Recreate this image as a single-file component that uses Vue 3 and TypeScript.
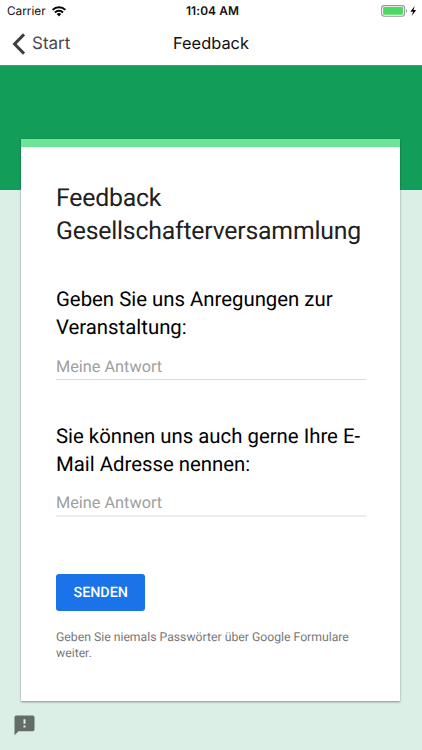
<script setup lang="ts">
import { ref } from 'vue'

interface Question {
  id: string
  lines: string[]
}

const questions: Question[] = [
  { id: 'suggestions', lines: ['Geben Sie uns Anregungen zur', 'Veranstaltung:'] },
  { id: 'email', lines: ['Sie können uns auch gerne Ihre E-', 'Mail Adresse nennen:'] },
]

const answers = ref<Record<string, string>>({ suggestions: '', email: '' })
</script>

<template>
  <div class="screen">
    <header class="top">
      <div class="status">
        <div class="carrier">
          <span>Carrier</span>
          <svg class="wifi" viewBox="0 0 16 12" width="16" height="12">
            <g fill="none" stroke="#000" stroke-width="2">
              <path d="M1.6 4.9a9.1 9.1 0 0 1 12.8 0" />
              <path d="M4 7.5a5.7 5.7 0 0 1 8 0" />
            </g>
            <path d="M5.7 9.1a3.3 3.3 0 0 1 4.6 0L8 11.5z" />
          </svg>
        </div>
        <div class="clock">11:04 AM</div>
        <div class="power">
          <svg viewBox="0 0 38 14" width="38" height="14">
            <rect x="1.6" y="1.6" width="23" height="10.6" rx="2.6" fill="#fff" stroke="#98989a" stroke-width="1.1" />
            <rect x="3.1" y="3.1" width="20" height="7.6" rx="1.2" fill="#4cd964" />
            <path d="M26 5.2c1.5.5 1.5 3 0 3.5z" fill="#98989a" />
            <path d="M34.6 2.1 30.4 7.8h2.7l-1.5 4.1 4.6-5.8h-2.7z" />
          </svg>
        </div>
      </div>
      <nav class="nav">
        <div class="back">
          <svg viewBox="0 0 14 24" width="14" height="24">
            <path d="M12 2.4 2.6 12l9.4 9.6" fill="none" stroke="#3f3f3f" stroke-width="3" />
          </svg>
          <span>Start</span>
        </div>
        <div class="nav-title">Feedback</div>
      </nav>
    </header>

    <main class="page">
      <form class="card" @submit.prevent>
        <h1 class="title">Feedback<br />Gesellschafterversammlung</h1>
        <section v-for="q in questions" :key="q.id" class="question" :class="q.id">
          <label :for="q.id">
            <span v-for="line in q.lines" :key="line" class="line">{{ line }}</span>
          </label>
          <input :id="q.id" v-model="answers[q.id]" type="text" placeholder="Meine Antwort" />
        </section>
        <button class="send" type="submit">SENDEN</button>
        <p class="note">Geben Sie niemals Passwörter über Google Formulare<br />weiter.</p>
      </form>
      <svg class="report" viewBox="0 0 21 21" width="21" height="21">
        <path d="M2.2.5h16.6q1.7 0 1.7 1.7v12.4q0 1.7-1.7 1.7H4.5L.5 20.3V2.2Q.5.5 2.2.5z" fill="#626d68" />
        <path d="M9.5 4.2h2v4.6h-2zM9.5 10.4h2v2h-2z" fill="#dbefe6" />
      </svg>
    </main>
  </div>
</template>

<style>
body {
  margin: 0;
  background: #dbefe6;
}
</style>

<style scoped>
.screen {
  width: 422px;
  height: 750px;
  overflow: hidden;
  display: flex;
  flex-direction: column;
  font-family: Roboto, sans-serif;
  text-rendering: geometricPrecision;
}
.top {
  height: 65px;
  flex: none;
  background: #fff;
  border-bottom: 1px solid #36a66e;
  font-family: Inter, sans-serif;
}
.status {
  height: 22px;
  display: grid;
  grid-template-columns: 1fr auto 1fr;
  align-items: center;
  color: #111;
  font-size: 11.9px;
}
.carrier {
  display: flex;
  align-items: center;
  gap: 5px;
  padding-left: 7px;
  font-size: 11.8px;
}
.clock {
  font-weight: 600;
  padding: 0 0 1px 3px;
  letter-spacing: 0.1px;
}
.power {
  display: flex;
  justify-content: flex-end;
  padding-right: 4px;
}
.nav {
  height: 43px;
  display: grid;
  grid-template-columns: 1fr auto 1fr;
  align-items: center;
  font-size: 17px;
}
.back {
  display: flex;
  align-items: center;
  gap: 6px;
  padding-left: 12px;
  color: #484848;
}
.nav-title {
  padding-bottom: 2px;
  font-size: 16.4px;
  color: #111;
}
.page {
  flex: 1;
  padding: 73px 21px 0;
  background: linear-gradient(#129e59 124px, #dbefe6 124px);
}
.card {
  box-sizing: border-box;
  width: 379.4px;
  height: 562px;
  padding: 36px 34px 0 35px;
  border-top: 8px solid #6ee497;
  background: #fff;
  box-shadow: 0 1px 2px rgba(0, 0, 0, 0.4);
}
.title {
  height: 65px;
  margin: 0;
  font-size: 24.8px;
  font-weight: 400;
  line-height: 32.5px;
  letter-spacing: -0.2px;
  color: #212121;
}
.question {
  height: 94px;
}
.suggestions {
  margin-top: 38px;
}
.email {
  margin-top: 43px;
}
.line {
  display: block;
  font-size: 20.35px;
  line-height: 27.5px;
  color: #000;
  white-space: nowrap;
}
.question input {
  display: block;
  box-sizing: border-box;
  width: 310px;
  height: 27px;
  margin-top: 12px;
  padding: 0;
  border: 0;
  border-bottom: 1px solid #dadada;
  border-radius: 0;
  outline: 0;
  background: transparent;
  font: 16.3px Roboto, sans-serif;
  text-rendering: inherit;
}
.question.email input {
  border-bottom: 2px solid #ececec;
}
.question input::placeholder {
  color: #a0a0a0;
  opacity: 1;
}
.send {
  display: block;
  width: 89.4px;
  height: 37px;
  margin-top: 57px;
  padding: 0;
  border: 0;
  border-radius: 3px;
  background: #1a73e8;
  color: #fff;
  font: 500 14.3px Roboto, sans-serif;
  text-rendering: inherit;
}
.note {
  margin: 19px 0 0;
  font-size: 12.22px;
  line-height: 15.5px;
  color: #777;
}
.report {
  display: block;
  margin: 14px 0 0 -7px;
}
</style>
